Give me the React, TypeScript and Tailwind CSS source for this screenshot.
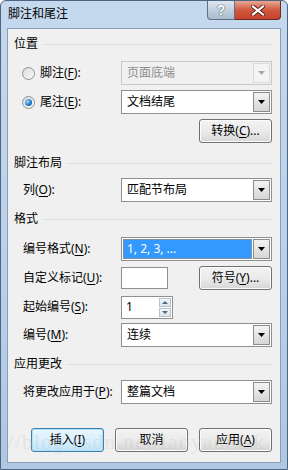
import React from 'react';

const U: React.FC<{ children: React.ReactNode }> = ({ children }) => (
  <span className="underline underline-offset-2">{children}</span>
);

const Arrow: React.FC<{ disabled?: boolean }> = ({ disabled }) => (
  <svg width="8" height="5" viewBox="0 0 8 5">
    <path d="M0 0 H7 L3.5 4 Z" fill={disabled ? '#a8a8a8' : '#000'} />
  </svg>
);

const Select: React.FC<{ value: string; disabled?: boolean; highlighted?: boolean }> = ({
  value,
  disabled,
  highlighted,
}) => (
  <div
    className={`w-[151px] h-[24px] flex items-stretch border ${
      disabled ? 'border-[#c9c9c9] bg-[#f0f0f0]' : 'border-[#8e8f8f] bg-white'
    }`}
  >
    <div className="flex-1 flex items-center p-[1px] min-w-0">
      {highlighted ? (
        <div className="flex-1 h-full flex items-center bg-[#3399ff] text-white pl-[3px] border border-dotted border-[#c98a45]">
          {value}
        </div>
      ) : (
        <span className={`pl-[4px] ${disabled ? 'text-[#8d8d8d]' : 'text-black'}`}>{value}</span>
      )}
    </div>
    <div
      className={`w-[17px] my-[1px] mr-[1px] flex items-center justify-center border ${
        disabled
          ? 'border-[#dadada] bg-[#f4f4f4]'
          : 'border-[#8c8c8c] bg-gradient-to-b from-[#f3f3f3] to-[#d6d6d6]'
      }`}
    >
      <Arrow disabled={disabled} />
    </div>
  </div>
);

const Button: React.FC<{ children: React.ReactNode; isDefault?: boolean }> = ({ children, isDefault }) => (
  <div
    className={`w-[73px] h-[24px] flex items-center justify-center rounded-[3px] border ${
      isDefault
        ? 'border-[#3c7fb1] bg-gradient-to-b from-[#eaf6fd] via-[#d9f0fc] to-[#bee6fd] shadow-[inset_0_0_0_1px_#aee0f6]'
        : 'border-[#707070] bg-gradient-to-b from-[#f2f2f2] via-[#ebebeb] to-[#d6d6d6] shadow-[inset_0_0_0_1px_#fcfcfc]'
    }`}
  >
    {children}
  </div>
);

const Header: React.FC<{ title: string; className?: string }> = ({ title, className }) => (
  <div className={`h-[16px] flex items-center pl-[6px] pr-[7px] gap-[6px] ${className ?? ''}`}>
    <span>{title}</span>
    <div className="flex-1 h-px bg-[#d5dfe5]" />
  </div>
);

const Radio: React.FC<{ checked?: boolean }> = ({ checked }) => (
  <div className="w-[13px] h-[13px] rounded-full border border-[#8e8f8f] bg-gradient-to-br from-[#dcdcdc] to-[#fbfbfb] flex items-center justify-center">
    {checked && (
      <div className="w-[7px] h-[7px] rounded-full bg-[radial-gradient(circle_at_35%_35%,#9fd9ff,#1a74c0_60%,#0d4f8b)]" />
    )}
  </div>
);

const Row: React.FC<{ label: React.ReactNode; children: React.ReactNode; className?: string }> = ({
  label,
  children,
  className,
}) => (
  <div className={`h-[24px] flex items-center pl-[15px] pr-[8px] ${className ?? ''}`}>
    <div className="flex-1 flex items-center">{label}</div>
    {children}
  </div>
);

export default function App() {
  return (
    <div className="w-[288px] h-[470px] overflow-hidden relative font-['Noto_Sans','Noto_Sans_CJK_SC',sans-serif] text-[12px] leading-[16px] text-black">
      <div className="w-full h-full flex flex-col border border-[#4e6480] rounded-t-[6px] bg-gradient-to-b from-[#c4d8ee] via-[#bcd2ea] to-[#aec7e2]">
        {/* title bar */}
        <div className="h-[27px] flex items-start">
          <span className="pl-[7px] pt-[5px] text-[12px] text-black">脚注和尾注</span>
          <div className="ml-auto mr-[6px] flex">
            <div className="w-[28px] h-[19px] flex items-center justify-center rounded-bl-[4px] border border-t-0 border-[#5d7085] bg-gradient-to-b from-[#dde6ef] via-[#c2d0de] to-[#a8bacd]">
              <span className="font-['Liberation_Sans',sans-serif] font-bold text-[14px] text-white [text-shadow:0_0_1px_#2c3a4a,0_0_1px_#2c3a4a]">
                ?
              </span>
            </div>
            <div className="w-[46px] h-[19px] flex items-center justify-center rounded-br-[4px] border border-t-0 border-l-0 border-[#6b2c22] bg-gradient-to-b from-[#e8a793] via-[#d1583f] to-[#c8412a]">
              <svg width="14" height="11" viewBox="0 0 14 11">
                <path
                  d="M2 1.5 L12 9.5 M12 1.5 L2 9.5"
                  stroke="#5a1c12"
                  strokeWidth="4"
                  strokeLinecap="square"
                />
                <path d="M2 1.5 L12 9.5 M12 1.5 L2 9.5" stroke="#fff" strokeWidth="2.2" strokeLinecap="square" />
              </svg>
            </div>
          </div>
        </div>

        {/* client area */}
        <div className="mx-[6px] h-[435px] border border-[#8c9fb6] bg-[#f0f0f0] flex flex-col">
          <Header title="位置" className="mt-[7px]" />
          <Row
            className="mt-[9px]"
            label={
              <div className="flex items-center gap-[5px] -ml-[1px]">
                <Radio />
                <span>
                  脚注(<U>F</U>):
                </span>
              </div>
            }
          >
            <Select value="页面底端" disabled />
          </Row>
          <Row
            className="mt-[5px]"
            label={
              <div className="flex items-center gap-[5px] -ml-[1px]">
                <Radio checked />
                <span>
                  尾注(<U>E</U>):
                </span>
              </div>
            }
          >
            <Select value="文档结尾" />
          </Row>
          <div className="mt-[5px] h-[24px] flex justify-end pr-[8px]">
            <Button>
              转换(<U>C</U>)...
            </Button>
          </div>

          <Header title="脚注布局" className="mt-[12px]" />
          <Row
            className="mt-[7px]"
            label={
              <span>
                列(<U>O</U>):
              </span>
            }
          >
            <Select value="匹配节布局" />
          </Row>

          <Header title="格式" className="mt-[9px]" />
          <Row
            className="mt-[10px]"
            label={
              <span>
                编号格式(<U>N</U>):
              </span>
            }
          >
            <Select value="1, 2, 3, ..." highlighted />
          </Row>
          <Row
            className="mt-[5px]"
            label={
              <span>
                自定义标记(<U>U</U>):
              </span>
            }
          >
            <div className="w-[151px] flex items-center justify-between">
              <div className="w-[47px] h-[22px] border border-[#8e8f8f] bg-white" />
              <Button>
                符号(<U>Y</U>)...
              </Button>
            </div>
          </Row>
          <Row
            className="mt-[5px]"
            label={
              <span>
                起始编号(<U>S</U>):
              </span>
            }
          >
            <div className="w-[151px] flex">
              <div className="w-[52px] h-[23px] border border-[#8e8f8f] bg-white flex items-center">
                <span className="pl-[4px] flex-1">1</span>
                <div className="w-[13px] h-full flex flex-col gap-[1px] py-[1px] pr-[1px]">
                  <div className="flex-1 flex items-center justify-center border border-[#b7c1cb] bg-gradient-to-b from-[#f4f6f8] to-[#dfe5eb]">
                    <svg width="6" height="3" viewBox="0 0 6 3">
                      <path d="M0 3 H6 L3 0 Z" fill="#4a6a8c" />
                    </svg>
                  </div>
                  <div className="flex-1 flex items-center justify-center border border-[#b7c1cb] bg-gradient-to-b from-[#f4f6f8] to-[#dfe5eb]">
                    <svg width="6" height="3" viewBox="0 0 6 3">
                      <path d="M0 0 H6 L3 3 Z" fill="#4a6a8c" />
                    </svg>
                  </div>
                </div>
              </div>
            </div>
          </Row>
          <Row
            className="mt-[4px]"
            label={
              <span>
                编号(<U>M</U>):
              </span>
            }
          >
            <Select value="连续" />
          </Row>

          <Header title="应用更改" className="mt-[9px]" />
          <Row
            className="mt-[8px]"
            label={
              <span>
                将更改应用于(<U>P</U>):
              </span>
            }
          >
            <Select value="整篇文档" />
          </Row>

          <div className="mt-[24px] h-[24px] flex justify-end gap-[11px] pr-[8px]">
            <Button isDefault>
              插入(<U>I</U>)
            </Button>
            <Button>取消</Button>
            <Button>
              应用(<U>A</U>)
            </Button>
          </div>
        </div>
      </div>

      {/* watermark */}
      <div className="absolute left-0 top-[434px] pointer-events-none font-['Liberation_Serif',serif] text-[21px] tracking-[1.5px] text-[#c4c4c4] opacity-30 whitespace-nowrap">
        ://blog.csdn.net/laoyaotask
      </div>
    </div>
  );
}
